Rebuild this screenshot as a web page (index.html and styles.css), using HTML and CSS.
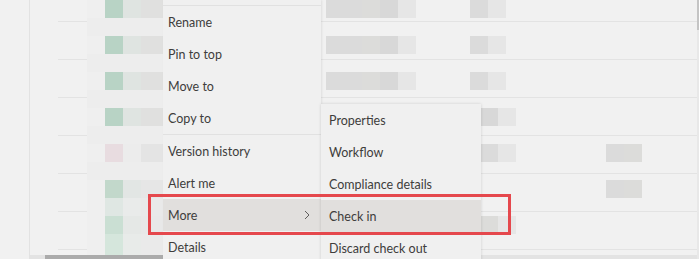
FILE: index.html
```html
<!DOCTYPE html>
<html lang="en">
<head>
    <meta charset="UTF-8">
    <meta name="viewport" content="width=device-width, initial-scale=1.0">
    <title>Documents - context menu</title>
    <link rel="stylesheet" href="styles.css">
</head>
<body>
<div class="screen">
    <div class="panel">
        <div class="main">
            <div class="list">
                <div class="rows">
                    <div class="row">
                        <div class="tiles">
                            <span></span><span class="g1"></span><span class="g2"></span><span class="g3"></span>
                        </div>
                        <div class="words">
                            <span class="w1"></span><span class="w1"></span><span class="w2"></span><span class="w3"></span><span class="w4"></span>
                        </div>
                        <div class="words short">
                            <span class="w1"></span><span class="w4"></span>
                        </div>
                    </div>
                    <div class="row">
                        <div class="tiles">
                            <span></span><span class="g1"></span><span class="g2"></span><span class="g3"></span>
                        </div>
                        <div class="words">
                            <span class="w1"></span><span class="w1"></span><span class="w2"></span><span class="w3"></span><span class="w4"></span>
                        </div>
                        <div class="words short">
                            <span class="w1"></span><span class="w4"></span>
                        </div>
                    </div>
                    <div class="row">
                        <div class="tiles">
                            <span></span><span class="g1"></span><span class="g2"></span><span class="g3"></span>
                        </div>
                        <div class="words">
                            <span class="w1"></span><span class="w1"></span><span class="w2"></span><span class="w3"></span><span class="w4"></span>
                        </div>
                        <div class="words short">
                            <span class="w1"></span><span class="w4"></span>
                        </div>
                    </div>
                    <div class="row">
                        <div class="tiles">
                            <span></span><span class="g1"></span><span class="g2"></span><span class="g3"></span>
                        </div>
                        <div class="words far">
                            <span class="w3"></span><span class="w4"></span>
                        </div>
                    </div>
                    <div class="row">
                        <div class="tiles">
                            <span></span><span class="p1"></span><span class="p2"></span><span class="p3"></span>
                        </div>
                        <div class="words far">
                            <span class="w1"></span><span class="w4"></span>
                        </div>
                        <div class="words size">
                            <span class="w1"></span><span class="w2"></span>
                        </div>
                    </div>
                    <div class="row">
                        <div class="tiles">
                            <span></span><span class="g4"></span><span class="g5"></span><span class="g6"></span>
                            <span></span><span class="h1"></span><span class="h2"></span><span class="h3"></span>
                        </div>
                        <div class="words size wide">
                            <span class="w1"></span><span class="w2"></span>
                        </div>
                    </div>
                    <div class="row">
                        <div class="tiles">
                            <span></span><span class="g7"></span><span class="g8"></span><span class="g9"></span>
                            <span></span><span class="h4"></span><span class="h5"></span><span class="h6"></span>
                        </div>
                        <div class="words far">
                            <span class="w2"></span><span class="w4"></span>
                        </div>
                    </div>
                    <div class="row">
                        <div class="tiles">
                            <span></span><span class="h4"></span><span class="h5"></span><span class="h6"></span>
                        </div>
                    </div>
                </div>
            </div>
            <div class="hscroll"><div class="thumb"></div></div>
        </div>
        <div class="vscroll"><div class="thumb"></div></div>
    </div>

    <div class="menu menu-main">
        <div class="sep"></div>
        <div class="item">Rename</div>
        <div class="item">Pin to top</div>
        <div class="item">Move to</div>
        <div class="item">Copy to</div>
        <div class="sep"></div>
        <div class="item">Version history</div>
        <div class="item">Alert me</div>
        <div class="item active">More
            <svg class="chev" width="6" height="10" viewBox="0 0 6 10"><path d="M1 1 L5 5 L1 9" fill="none" stroke="#605e5c" stroke-width="1"/></svg>
        </div>
        <div class="item">Details</div>
    </div>

    <div class="menu menu-sub">
        <div class="item">Properties</div>
        <div class="item">Workflow</div>
        <div class="item">Compliance details</div>
        <div class="item active">Check in</div>
        <div class="item">Discard check out</div>
    </div>

    <div class="callout"></div>
</div>
</body>
</html>
```

FILE: styles.css
```css
*{
    box-sizing: border-box;
    margin: 0;
    padding: 0;
}

body{
    background: #f1f1f1;
    font-family: "Segoe UI", Lato, "Liberation Sans", sans-serif;
    overflow: hidden;
}

.screen{
    position: relative;
    width: 699px;
    height: 259px;
    overflow: hidden;
}

/* blurred list behind the menu */
.panel{
    display: flex;
    height: 259px;
    margin-left: 29px;
    border-left: 1px solid #e2e2e2;
}

.main{
    flex: 1;
    display: flex;
    flex-direction: column;
    min-width: 0;
}

.list{
    flex: 1;
    overflow: hidden;
}

.rows{
    margin-top: -16px;
}

.row{
    height: 38px;
    display: flex;
    align-items: flex-start;
    padding-left: 28px;
    background: linear-gradient(#e3e3e3, #e3e3e3) left bottom / 100% 1px no-repeat;
    background-origin: content-box;
    background-clip: content-box;
}

.row:nth-child(1){ padding-top: 16px; }
.row:nth-child(2){ padding-top: 14px; }
.row:nth-child(3){ padding-top: 12px; }
.row:nth-child(4){ padding-top: 10px; }
.row:nth-child(5){ padding-top: 8px; }
.row:nth-child(6){ padding-top: 6px; }
.row:nth-child(7){ padding-top: 4px; }
.row:nth-child(8){ padding-top: 2px; }

.tiles{
    display: grid;
    grid-template-columns: 18px 18px 18px 22px;
    grid-template-rows: 18px 18px;
    margin-left: 29px;
    background: #ededed;
    flex-shrink: 0;
}

.tiles span:first-child,
.tiles span:nth-child(5){
    background: #efefef;
}

.g1{ background: #b8d3c5; }
.g2{ background: #dfe4e1; }
.g3{ background: #e0e0df; }
.g4{ background: #c2d8cb; }
.g5{ background: #e2e6e4; }
.g6{ background: #e6e6e6; }
.g7{ background: #cadfd3; }
.g8{ background: #e5e8e6; }
.g9{ background: #e8e8e8; }
.h1{ background: #dfe7e3; }
.h2{ background: #e9ebea; }
.h3{ background: #e9e9e9; }
.h4{ background: #d5e6dc; }
.h5{ background: #e8ebe9; }
.h6{ background: #eaeaea; }
.p1{ background: #e8dce0; }
.p2{ background: #ececec; }
.p3{ background: #e4e4e4; }

.words{
    display: flex;
    margin-left: 163px;
    height: 18px;
    flex-shrink: 0;
}

.words span{
    width: 18px;
}

.words.short{
    margin-left: 54px;
}

.words.far{
    margin-left: 317px;
}

.words.size{
    margin-left: 90px;
}

.words.size.wide{
    margin-left: 443px;
}

.w1{ background: #dbdbdb; }
.w2{ background: #dcdcda; }
.w3{ background: #d8d8d8; }
.w4{ background: #e6e6e6; }

.hscroll{
    height: 4px;
    background: #e3e3e3;
}

.hscroll .thumb{
    margin-left: 15px;
    width: 170px;
    height: 4px;
    background: #ababab;
}

.vscroll{
    width: 2px;
    background: #e8e8e8;
}

.vscroll .thumb{
    height: 30px;
    background: #c4c4c4;
}

/* context menus */
.menu{
    position: absolute;
    background: #f0f0f0;
    color: #3e3d3c;
    font-size: 12.5px;
}

.menu-main{
    left: 163px;
    top: 0;
    width: 158px;
    padding-top: 5px;
    box-shadow: 1px 0 2px rgba(0, 0, 0, .08);
}

.menu-sub{
    left: 321px;
    top: 104px;
    width: 160px;
    box-shadow: 0 0 3px rgba(0, 0, 0, .14);
}

.sep{
    height: 1px;
    background: #e1e1e1;
}

.item{
    height: 32px;
    display: flex;
    align-items: center;
    padding: 0 11px 0 5px;
    white-space: nowrap;
}

.menu-sub .item{
    padding-left: 8px;
}

.item.active{
    background: #e1dfdd;
}

.chev{
    margin-left: auto;
}

.callout{
    position: absolute;
    left: 148px;
    top: 194px;
    width: 363px;
    height: 41px;
    border: 3px solid #e5484d;
}
```
